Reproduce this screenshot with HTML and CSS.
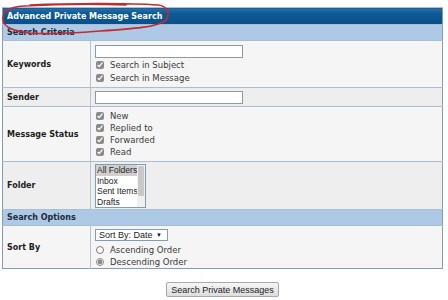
FILE: index.html
```html
<!DOCTYPE html>
<html lang="en">
<head>
    <meta charset="UTF-8">
    <title>Advanced Private Message Search</title>
    <link rel="stylesheet" href="styles.css">
</head>
<body>
    <form class="pm-search">
        <table class="tborder">
            <tr>
                <td colspan="2" class="tcat">Advanced Private Message Search</td>
            </tr>
            <tr>
                <td colspan="2" class="thead">Search Criteria</td>
            </tr>
            <tr class="alt1 row-keywords">
                <td class="label">Keywords</td>
                <td class="field">
                    <input type="text" class="textbox">
                    <label class="check"><input type="checkbox" checked> Search in Subject</label>
                    <label class="check"><input type="checkbox" checked> Search in Message</label>
                </td>
            </tr>
            <tr class="alt2 row-sender">
                <td class="label">Sender</td>
                <td class="field"><input type="text" class="textbox"></td>
            </tr>
            <tr class="alt1 row-status">
                <td class="label">Message Status</td>
                <td class="field">
                    <label class="check"><input type="checkbox" checked> New</label>
                    <label class="check"><input type="checkbox" checked> Replied to</label>
                    <label class="check"><input type="checkbox" checked> Forwarded</label>
                    <label class="check"><input type="checkbox" checked> Read</label>
                </td>
            </tr>
            <tr class="alt2 row-folder">
                <td class="label">Folder</td>
                <td class="field">
                    <div class="listbox">
                        <div class="options">
                            <div class="opt selected">All Folders</div>
                            <div class="opt">Inbox</div>
                            <div class="opt">Sent Items</div>
                            <div class="opt">Drafts</div>
                        </div>
                        <div class="scrollbar"><div class="thumb"></div></div>
                    </div>
                </td>
            </tr>
            <tr>
                <td colspan="2" class="thead">Search Options</td>
            </tr>
            <tr class="alt1 row-sort">
                <td class="label">Sort By</td>
                <td class="field">
                    <div class="select">Sort By: Date <span class="arrow">&#9660;</span></div>
                    <label class="check radio"><input type="radio" name="order"> Ascending Order</label>
                    <label class="check radio"><input type="radio" name="order" checked> Descending Order</label>
                </td>
            </tr>
        </table>
        <div class="actions">
            <button type="button" class="button">Search Private Messages</button>
        </div>
    </form>
    <!-- hand-drawn highlight around the title -->
    <svg class="scribble" width="180" height="40" viewBox="0 0 180 40">
        <path d="M30 5 C70 3 130 3 158 5 C168 6 170 14 166 20 C160 27 130 29 100 31 C75 33 50 35 30 33 C15 31 4 28 3 20 C2 12 8 7 24 6 C60 4 100 4 126 5"
              fill="none" stroke="#c42a31" stroke-width="1.6" stroke-linecap="round"/>
    </svg>
</body>
</html>
```

FILE: styles.css
```css
body {
    margin: 0;
    padding: 0;
    background-color: #ffffff;
    font-family: "DejaVu Sans", Verdana, sans-serif;
    position: relative;
}
.pm-search {
    padding: 7px 0 0 2px;
    width: 441px;
}
.tborder {
    width: 441px;
    border-collapse: collapse;
    border: 1px solid #7f9db4;
}
.tborder td {
    padding: 0 0 0 4px;
    border-top: 1px solid #a9bfcf;
}
.tcat {
    height: 16px;
    background: linear-gradient(#2a6ea6 0%, #0d5a97 30%, #0a4f8a 100%);
    color: #ffffff;
    font-size: 8px;
    font-weight: bold;
}
.thead {
    height: 15px;
    background-color: #adc9e6;
    color: #1c2b3a;
    font-size: 8px;
    font-weight: bold;
}
.alt1 {
    background-color: #f6f5f5;
}
.alt2 {
    background-color: #eeeeee;
}
.tborder td.label {
    width: 83px;
    font-size: 8px;
    font-weight: bold;
    color: #1d1d1d;
    border-right: 1px solid #b5c4d0;
    white-space: nowrap;
}
.tborder td.field {
    padding: 3px 0 3px 4px;
    font-size: 8px;
    color: #333333;
}
.row-keywords td { height: 40px; }
.row-sender td { height: 11px; }
.row-sender td.field { padding: 3px 0 2px 4px; }
.row-status td { height: 47px; }
.row-folder td { height: 44px; }
.tborder .row-folder td.field { padding: 2px 0 1px 4px; }
.row-sort td { height: 39px; }
.tborder .row-sort td.field { padding: 3px 0 0 4px; }

.textbox {
    display: block;
    box-sizing: border-box;
    width: 148px;
    height: 13px;
    margin: 0;
    border: 1px solid #8a9aa6;
    background: #ffffff;
}
.check {
    display: flex;
    align-items: center;
    height: 12px;
    margin-top: 0;
    font-size: 8.5px;
    color: #3a3a3a;
    white-space: nowrap;
}
.row-keywords .check {
    margin-top: 1px;
}
.check input {
    width: 8px;
    height: 8px;
    margin: 0 6px 0 1px;
    accent-color: #8a8a8a;
}
.listbox {
    display: flex;
    width: 51px;
    height: 44px;
    border: 1px solid #7f9db4;
    background: #ffffff;
    box-sizing: border-box;
    font-family: "Liberation Sans", Arial, sans-serif;
    font-size: 8.5px;
    color: #222222;
    overflow: hidden;
}
.options {
    flex: 1;
    min-width: 0;
    overflow: hidden;
}
.opt {
    height: 10.5px;
    line-height: 10.5px;
    padding-left: 1px;
    white-space: nowrap;
}
.opt.selected {
    background-color: #cfcfcf;
}
.scrollbar {
    width: 6px;
    background: #f0f0f0;
    padding: 1px;
}
.thumb {
    height: 30px;
    background: #c8c8c8;
    border-radius: 1px;
}
.select {
    display: flex;
    align-items: center;
    justify-content: space-between;
    box-sizing: border-box;
    width: 73px;
    height: 12px;
    margin-bottom: 3px;
    padding: 0 5px 0 3px;
    border: 1px solid #7f9db4;
    background: #ffffff;
    font-family: "Liberation Sans", Arial, sans-serif;
    font-size: 9px;
    color: #222222;
    white-space: nowrap;
}
.arrow {
    font-size: 6px;
    color: #111111;
}
.actions {
    display: flex;
    justify-content: center;
    padding-top: 13px;
}
.button {
    height: 15px;
    padding: 0 4px;
    border: 1px solid #a9a9a9;
    border-radius: 2px;
    background: linear-gradient(#f6f6f6, #dddddd);
    font-family: "Liberation Sans", Arial, sans-serif;
    font-size: 9px;
    color: #222222;
}
.scribble {
    position: absolute;
    left: 0;
    top: 0;
    pointer-events: none;
}
```
